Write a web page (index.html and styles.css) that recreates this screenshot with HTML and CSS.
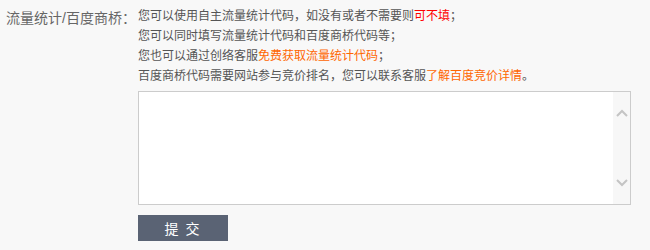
FILE: index.html
```html
<!DOCTYPE html>
<html lang="zh-CN">
<head>
    <meta charset="UTF-8">
    <title>流量统计</title>
    <link rel="stylesheet" href="styles.css">
</head>
<body>
    <div class="form-row">
        <label class="form-label" for="statCode">流量统计/百度商桥：</label>
        <div class="form-field">
            <div class="tips">
                <p>您可以使用自主流量统计代码，如没有或者不需要则<span class="red">可不填</span>；</p>
                <p>您可以同时填写流量统计代码和百度商桥代码等；</p>
                <p>您也可以通过创络客服<a href="#" class="orange">免费获取流量统计代码</a>；</p>
                <p>百度商桥代码需要网站参与竞价排名，您可以联系客服<a href="#" class="orange">了解百度竞价详情</a>。</p>
            </div>
            <div class="code-box">
                <textarea id="statCode"></textarea>
                <div class="scrollbar">
                    <svg width="12" height="8" viewBox="0 0 12 8"><polyline points="1,7 6,2 11,7" fill="none" stroke="#c4c4c4" stroke-width="2"/></svg>
                    <svg width="12" height="8" viewBox="0 0 12 8"><polyline points="1,1 6,6 11,1" fill="none" stroke="#c4c4c4" stroke-width="2"/></svg>
                </div>
            </div>
            <button class="submit-button">提 交</button>
        </div>
    </div>
</body>
</html>
```

FILE: styles.css
```css
body {
    margin: 0;
    background: #f8f8f8;
    font-family: "Liberation Sans", "Noto Sans CJK SC", sans-serif;
    color: #555;
}
.form-row {
    display: flex;
    padding: 6px 0 0 6px;
}
.form-label {
    width: 132px;
    font-size: 14px;
    line-height: 24px;
    color: #666;
}
.form-field {
    display: flex;
    flex-direction: column;
    align-items: flex-start;
}
.tips p {
    margin: 0;
    font-size: 12px;
    line-height: 20px;
}
.red {
    color: #f00;
}
.orange {
    color: #f60;
    text-decoration: none;
}
.code-box {
    display: flex;
    width: 491px;
    height: 112px;
    margin-top: 5px;
    border: 1px solid #ccc;
    background: #fff;
}
.code-box textarea {
    flex: 1;
    border: none;
    outline: none;
    resize: none;
    overflow: hidden;
    padding: 4px;
}
.scrollbar {
    width: 17px;
    background: #f7f7f7;
    display: flex;
    flex-direction: column;
    justify-content: space-between;
    align-items: center;
    padding: 17px 0 17px;
}
.submit-button {
    margin-top: 10px;
    width: 90px;
    height: 26px;
    border: none;
    background: #5a6374;
    color: #fff;
    font-family: "Noto Sans CJK SC", sans-serif;
    font-size: 14px;
    letter-spacing: 2px;
    cursor: pointer;
}
```
